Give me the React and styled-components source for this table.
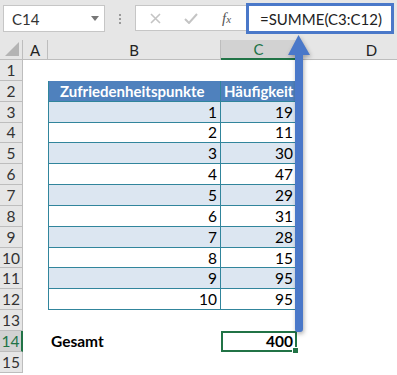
import React from 'react'
import styled, { createGlobalStyle } from 'styled-components'

const GlobalStyle = createGlobalStyle`
  html, body {
    margin: 0;
    padding: 0;
    background: #ffffff;
  }
  body {
    font-family: Lato, "Liberation Sans", sans-serif;
  }
`

const GREEN = '#217346'
const HEAD_BG = '#e6e6e6'
const LINE = '#bdbdbd'
const TABLE_LINE = '#31859c'

const Window = styled.div`
  position: relative;
  width: 397px;
  height: 375px;
  overflow: hidden;
  background: #fff;
`

/* formula bar */
const Toolbar = styled.div`
  height: 40px;
  background: ${HEAD_BG};
  display: flex;
  align-items: flex-start;
  box-sizing: border-box;
  padding: 5px 0 0 3px;
`

const NameBox = styled.div`
  width: 102px;
  height: 27px;
  box-sizing: border-box;
  background: #fff;
  border: 1px solid #c6c6c6;
  display: flex;
  align-items: center;
  justify-content: space-between;
  padding: 0 5px 0 8px;
  font-size: 15px;
  color: #333;
`

const Caret = styled.span`
  width: 0;
  height: 0;
  border-left: 4px solid transparent;
  border-right: 4px solid transparent;
  border-top: 5px solid #777;
`

const Grip = styled.div`
  width: 30px;
  height: 27px;
  display: flex;
  flex-direction: column;
  align-items: center;
  justify-content: center;
  gap: 2px;

  span {
    width: 2px;
    height: 2px;
    background: #9a9a9a;
  }
`

const EditBox = styled.div`
  width: 111px;
  height: 26px;
  box-sizing: border-box;
  background: #fff;
  border: 1px solid #c6c6c6;
  border-right: none;
  display: flex;
  align-items: center;
  padding-left: 14px;
  gap: 23px;
`

const Fx = styled.span`
  font-family: "Liberation Serif", serif;
  font-style: italic;
  font-size: 15px;
  color: #555;
  margin-left: 1px;

  small {
    font-size: 11px;
  }
`

const FormulaBox = styled.div`
  flex: 0 0 148px;
  height: 31px;
  margin-top: -2px;
  box-sizing: border-box;
  background: #fff;
  border: 3px solid #4a78c9;
  display: flex;
  align-items: center;
  padding-left: 11px;
  font-size: 15px;
  color: #222;
`

/* worksheet */
const Sheet = styled.div`
  display: grid;
  grid-template-columns: 23px 25px 173px 76px 150px;
  grid-template-rows: 20px repeat(15, 20.85px);
`

const ColHead = styled.div`
  background: ${p => (p.$active ? '#d2d2d2' : HEAD_BG)};
  border-right: 1px solid ${p => (p.$last ? 'transparent' : LINE)};
  border-bottom: ${p => (p.$active ? `2px solid ${GREEN}` : `1px solid ${LINE}`)};
  color: ${p => (p.$active ? GREEN : '#222')};
  font-size: 15px;
  display: flex;
  align-items: center;
  justify-content: center;
  box-sizing: border-box;
`

const Corner = styled.div`
  position: relative;
  background: ${HEAD_BG};
  border-right: 1px solid ${LINE};
  border-bottom: 1px solid ${LINE};
  box-sizing: border-box;

  &::after {
    content: '';
    position: absolute;
    right: 3px;
    bottom: 3px;
    width: 0;
    height: 0;
    border-left: 14px solid transparent;
    border-bottom: 14px solid #b4b4b4;
  }
`

const RowHead = styled.div`
  background: ${p => (p.$active ? '#d2d2d2' : HEAD_BG)};
  border-bottom: 1px solid ${LINE};
  border-right: ${p => (p.$active ? `2px solid ${GREEN}` : `1px solid ${LINE}`)};
  color: ${p => (p.$active ? GREEN : '#333')};
  font-size: 15.5px;
  display: flex;
  align-items: center;
  justify-content: center;
  box-sizing: border-box;
`

const Cell = styled.div`
  position: relative;
  box-sizing: border-box;
  display: flex;
  align-items: center;
  justify-content: ${p => (p.$num ? 'flex-end' : 'flex-start')};
  padding: 0 3px;
  font-size: 15.5px;
  color: #000;
  font-weight: ${p => (p.$bold ? 700 : 400)};
  white-space: nowrap;
`

const TableCell = styled(Cell)`
  background: ${p => (p.$head ? '#4f81bd' : p.$band ? '#dce6f1' : '#fff')};
  color: ${p => (p.$head ? '#fff' : '#000')};
  font-weight: ${p => (p.$head ? 700 : 400)};
  font-size: ${p => (p.$head ? '15px' : '15.5px')};
  border-bottom: 1px solid ${TABLE_LINE};
  border-left: ${p => (p.$first ? `1px solid ${TABLE_LINE}` : 'none')};
  border-right: 1px solid ${TABLE_LINE};
  padding-left: ${p => (p.$head && p.$first ? '11px' : '3px')};
`

const ActiveCell = styled(Cell)`
  border: 2px solid ${GREEN};
  padding-right: 2px;

  &::after {
    content: '';
    position: absolute;
    right: -4px;
    bottom: -4px;
    width: 5px;
    height: 5px;
    background: ${GREEN};
    border: 1px solid #fff;
  }
`

/* callout arrow from the formula bar down to the result */
const Arrow = styled.svg`
  position: absolute;
  left: 286px;
  top: 33px;
  overflow: visible;
  filter: drop-shadow(1px 2px 2px rgba(0, 0, 0, 0.3));
`

const data = [19, 11, 30, 47, 29, 31, 28, 15, 95, 95]

const App = () => {
  const rows = []
  for (let r = 1; r <= 15; r++) {
    const isActive = r === 14
    rows.push(<RowHead key={`h${r}`} $active={isActive}>{r}</RowHead>)
    rows.push(<Cell key={`a${r}`} />)
    if (r === 2) {
      rows.push(<TableCell key="b2" $head $first>Zufriedenheitspunkte</TableCell>)
      rows.push(<TableCell key="c2" $head>Häufigkeit</TableCell>)
    } else if (r >= 3 && r <= 12) {
      const band = r % 2 === 1
      rows.push(<TableCell key={`b${r}`} $num $first $band={band}>{r - 2}</TableCell>)
      rows.push(<TableCell key={`c${r}`} $num $band={band}>{data[r - 3]}</TableCell>)
    } else if (r === 14) {
      rows.push(<Cell key="b14" $bold>Gesamt</Cell>)
      rows.push(<ActiveCell key="c14" $num $bold>400</ActiveCell>)
    } else {
      rows.push(<Cell key={`b${r}`} />)
      rows.push(<Cell key={`c${r}`} />)
    }
    rows.push(<Cell key={`d${r}`} />)
  }

  return (
    <Window>
      <GlobalStyle />
      <Toolbar>
        <NameBox>
          C14
          <Caret />
        </NameBox>
        <Grip>
          <span />
          <span />
          <span />
        </Grip>
        <EditBox>
          <svg width="11" height="11" viewBox="0 0 11 11">
            <path d="M1 1 L10 10 M10 1 L1 10" stroke="#c4c4c4" strokeWidth="1.6" />
          </svg>
          <svg width="14" height="11" viewBox="0 0 14 11">
            <path d="M1 6 L5 10 L13 1" stroke="#c4c4c4" strokeWidth="2" fill="none" />
          </svg>
          <Fx>
            f<small>x</small>
          </Fx>
        </EditBox>
        <FormulaBox>=SUMME(C3:C12)</FormulaBox>
      </Toolbar>

      <Sheet>
        <Corner />
        <ColHead>A</ColHead>
        <ColHead>B</ColHead>
        <ColHead $active>C</ColHead>
        <ColHead $last>D</ColHead>
        {rows}
      </Sheet>

      <Arrow width="24" height="300" viewBox="0 0 24 300">
        <path d="M12.5 2 L24 22 L17 22 L17 296 Q17 299 14 299 L11 299 Q9 299 9 296 L9 22 L2 22 Z" fill="#4a78c9" />
      </Arrow>
    </Window>
  )
}

export default App
